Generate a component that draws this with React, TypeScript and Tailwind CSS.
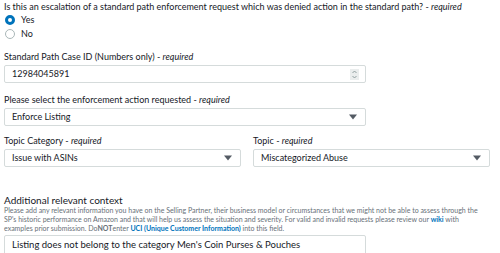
export default function App() {
  const font = { fontFamily: "Lato, 'Open Sans', sans-serif" };

  const Arrow = () => (
    <svg width="8" height="6" viewBox="0 0 8 6" className="shrink-0">
      <path d="M0 0.5h8L4 5.5z" fill="#545b64" />
    </svg>
  );

  return (
    <div style={font} className="w-[500px] h-[253px] overflow-hidden bg-white text-[#16191f] text-[9px] leading-[12px]">
      <div className="pl-[4px] pt-[1px]">
        <p>
          Is this an escalation of a standard path enforcement request which was denied action in the standard path? - <i>required</i>
        </p>

        {/* Radio options */}
        <div className="mt-[1px] flex flex-col gap-[2px]">
          <label className="flex items-center gap-[6px] h-[12px]">
            <span className="ml-[1px] w-[10px] h-[10px] rounded-full border-[3px] border-[#0073bb] bg-white" />
            <span>Yes</span>
          </label>
          <label className="flex items-center gap-[6px] h-[12px]">
            <span className="ml-[1px] w-[10px] h-[10px] rounded-full border border-[#aab7b8] bg-white" />
            <span>No</span>
          </label>
        </div>

        {/* Case ID */}
        <p className="mt-[11px]">
          Standard Path Case ID (Numbers only) - <i>required</i>
        </p>
        <div className="mt-[2px] w-[362px] h-[18px] border border-[#d5dbdb] rounded-[2px] flex items-center justify-between pl-[7px] pr-[6px]">
          <span>12984045891</span>
          <span className="w-[9px] h-[11px] bg-[#eaeded] flex items-center justify-center">
            <svg width="5" height="9" viewBox="0 0 5 9">
              <path d="M0.5 3L2.5 1L4.5 3M0.5 6L2.5 8L4.5 6" fill="none" stroke="#879596" strokeWidth="0.9" />
            </svg>
          </span>
        </div>

        {/* Enforcement action */}
        <p className="mt-[11px]">
          Please select the enforcement action requested - <i>required</i>
        </p>
        <div className="mt-[2px] w-[362px] h-[18px] border border-[#d5dbdb] rounded-[2px] flex items-center justify-between pl-[7px] pr-[8px]">
          <span>Enforce Listing</span>
          <Arrow />
        </div>

        {/* Topic row */}
        <div className="mt-[9px] flex gap-[12px]">
          <div className="w-[237px]">
            <p>
              Topic Category - <i>required</i>
            </p>
            <div className="mt-[2px] h-[18px] border border-[#d5dbdb] rounded-[2px] flex items-center justify-between pl-[7px] pr-[8px]">
              <span>Issue with ASINs</span>
              <Arrow />
            </div>
          </div>
          <div className="w-[237px]">
            <p>
              Topic - <i>required</i>
            </p>
            <div className="mt-[2px] h-[18px] border border-[#d5dbdb] rounded-[2px] flex items-center justify-between pl-[7px] pr-[8px]">
              <span>Miscategorized Abuse</span>
              <Arrow />
            </div>
          </div>
        </div>

        {/* Additional context */}
        <p className="mt-[28px] text-[10px] leading-[10px] text-[#16191f]">Additional relevant context</p>
        <p className="mt-[1px] text-[7px] leading-[9px] text-[#687078] pr-[14px]">
          Please add any relevant information you have on the Selling Partner, their business model or circumstances that we might not be able to assess through the SP's historic performance on Amazon and that will help us assess the situation and severity. For valid and invalid requests please review our{" "}
          <span className="font-bold text-[#0073bb]">wiki</span> with examples prior submission. Do<b>NOT</b>enter{" "}
          <span className="font-bold text-[#0073bb]">UCI (Unique Customer Information)</span> into this field.
        </p>
        <div className="mt-[2px] w-[362px] h-[40px] border border-[#d5dbdb] rounded-[2px] pl-[7px] pt-[3px] text-[9.5px] leading-[12px]">
          Listing does not belong to the category Men's Coin Purses &amp; Pouches
        </div>
      </div>
    </div>
  );
}
